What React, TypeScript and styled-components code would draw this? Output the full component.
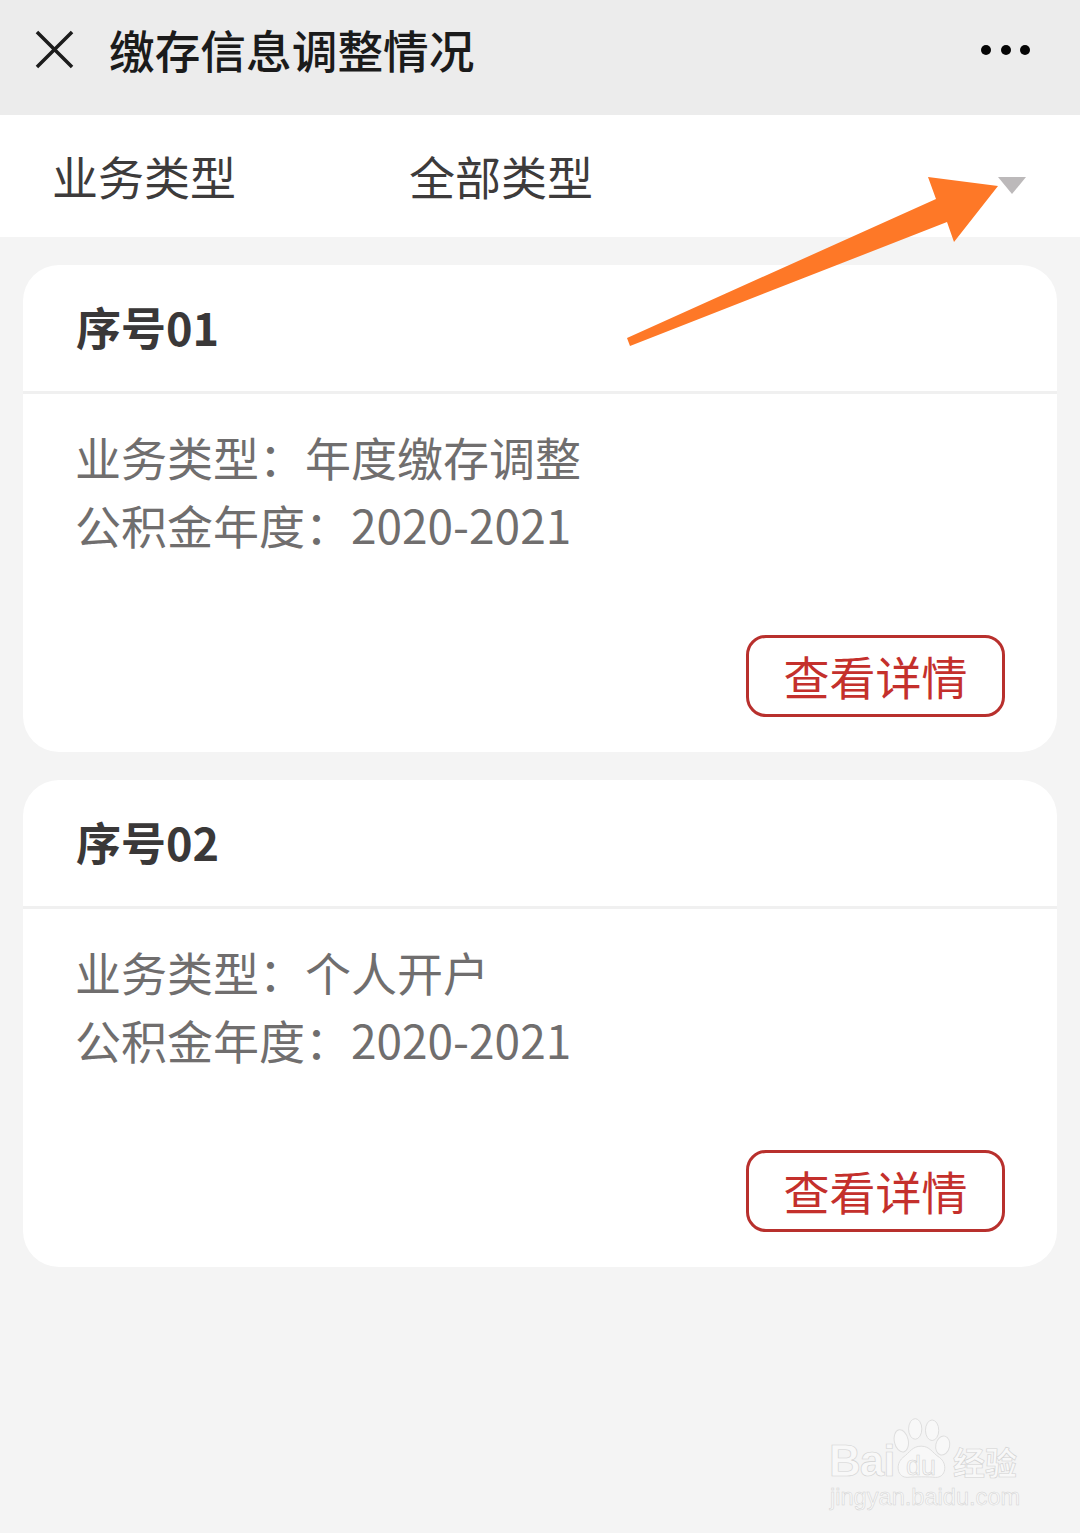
import * as React from 'react';
import styled, { createGlobalStyle } from 'styled-components';

const records = [
  { id: '01', type: '年度缴存调整', year: '2020-2021' },
  { id: '02', type: '个人开户', year: '2020-2021' },
];

const App: React.FC = () => {
  return (
    <Page>
      <GlobalStyle />
      <NavBar>
        <CloseIcon viewBox="0 0 40 40">
          <path d="M2 2 L38 38 M38 2 L2 38" />
        </CloseIcon>
        <NavTitle>缴存信息调整情况</NavTitle>
        <MoreDots>
          <Dot />
          <Dot />
          <Dot />
        </MoreDots>
      </NavBar>
      <FilterBar>
        <FilterLabel>业务类型</FilterLabel>
        <FilterValue>全部类型</FilterValue>
        <Caret />
      </FilterBar>
      <CardList>
        {records.map((r) => (
          <Card key={r.id}>
            <CardHead>序号{r.id}</CardHead>
            <CardBody>
              <InfoLine>业务类型：{r.type}</InfoLine>
              <InfoLine>公积金年度：{r.year}</InfoLine>
              <DetailRow>
                <DetailButton>查看详情</DetailButton>
              </DetailRow>
            </CardBody>
          </Card>
        ))}
      </CardList>
      <Arrow viewBox="0 0 1080 400">
        <polygon points="627,338 936,199 928,177 998,186 954,242 947,222 630,346" fill="#fe7827" />
      </Arrow>
      <Watermark>
        <PawLogo viewBox="280 50 175 190">
          <g fill="#f8f8f8" stroke="#dedede" strokeWidth="3">
            <ellipse cx="305" cy="122" rx="21" ry="34" transform="rotate(-12 305 122)" />
            <ellipse cx="347" cy="86" rx="20" ry="31" />
            <ellipse cx="398" cy="90" rx="20" ry="31" />
            <ellipse cx="430" cy="136" rx="21" ry="29" transform="rotate(12 430 136)" />
            <path d="M365 138 C392 138 398 158 420 172 C446 190 440 234 408 232 C388 230 345 230 325 232 C292 234 286 192 310 172 C332 156 338 138 365 138 Z" />
          </g>
        </PawLogo>
        <MarkRow>
          <MarkBrand>Bai</MarkBrand>
          <MarkDu>du</MarkDu>
          <MarkCn>经验</MarkCn>
        </MarkRow>
        <MarkUrl>jingyan.baidu.com</MarkUrl>
      </Watermark>
    </Page>
  );
};
export default App;

const GlobalStyle = createGlobalStyle`
  html, body {
    margin: 0;
    padding: 0;
    background: #f4f4f4;
  }
  * {
    box-sizing: border-box;
  }
`;
const Page = styled.div`
  position: relative;
  width: 1080px;
  height: 1533px;
  overflow: hidden;
  background: #f4f4f4;
  font-family: 'Noto Sans CJK SC', 'Noto Sans', sans-serif;
`;
const NavBar = styled.div`
  display: flex;
  align-items: center;
  height: 115px;
  padding: 0 50px 16px 35px;
  background: #ececec;
`;
const CloseIcon = styled.svg`
  width: 39px;
  height: 39px;
  stroke: #1c1c1c;
  stroke-width: 3.6;
  fill: none;
`;
const NavTitle = styled.div`
  flex: 1;
  margin-left: 35px;
  margin-bottom: 2px;
  font-size: 45.7px;
  font-weight: 500;
  line-height: 60px;
  color: #1b1b1b;
`;
const MoreDots = styled.div`
  display: flex;
  gap: 9.5px;
`;
const Dot = styled.span`
  width: 10px;
  height: 10px;
  border-radius: 50%;
  background: #050505;
`;
const FilterBar = styled.div`
  display: flex;
  align-items: center;
  height: 122px;
  padding: 0 54px 2px 52px;
  background: #fff;
  font-size: 46px;
  color: #3d3b3b;
`;
const FilterLabel = styled.div`
  width: 357px;
`;
const FilterValue = styled.div`
  flex: 1;
`;
const Caret = styled.div`
  width: 0;
  height: 0;
  margin-top: 20px;
  border-left: 14px solid transparent;
  border-right: 14px solid transparent;
  border-top: 17px solid #bcb9ba;
`;
const CardList = styled.div`
  display: flex;
  flex-direction: column;
  gap: 28px;
  padding: 28px 23px 0;
`;
const Card = styled.div`
  height: 487px;
  border-radius: 36px;
  background: #fff;
`;
const CardHead = styled.div`
  display: flex;
  align-items: center;
  height: 129px;
  padding: 0 54px 4px 53px;
  border-bottom: 3px solid #f0f0f0;
  font-size: 45px;
  font-weight: 700;
  color: #3a3838;
`;
const CardBody = styled.div`
  padding: 28px 54px 0 52px;
`;
const InfoLine = styled.div`
  font-size: 46px;
  line-height: 68px;
  color: #706e6e;
`;
const DetailRow = styled.div`
  display: flex;
  justify-content: flex-end;
  margin-top: 77px;
`;
const DetailButton = styled.div`
  display: flex;
  align-items: center;
  justify-content: center;
  width: 259px;
  height: 82px;
  margin-right: -2px;
  padding-bottom: 3px;
  border: 3px solid #b8302d;
  border-radius: 20px;
  font-size: 46px;
  color: #c4302c;
`;
const Arrow = styled.svg`
  position: absolute;
  left: 0;
  top: 0;
  width: 1080px;
  height: 400px;
`;
const Watermark = styled.div`
  position: absolute;
  left: 828px;
  top: 1417px;
  width: 200px;
  height: 100px;
`;
const PawLogo = styled.svg`
  position: absolute;
  left: 65px;
  top: 0;
  width: 58px;
  height: 63px;
`;
const MarkRow = styled.div`
  position: absolute;
  left: 0;
  top: 20px;
  width: 200px;
  height: 48px;
  color: #f8f8f8;
  -webkit-text-stroke: 0.6px #d2d2d2;
`;
const MarkBrand = styled.span`
  position: absolute;
  left: 1px;
  top: 0;
  font-family: 'Liberation Sans', sans-serif;
  font-size: 44px;
  font-weight: 700;
  line-height: 48px;
  letter-spacing: -1px;
`;
const MarkDu = styled.span`
  position: absolute;
  left: 78px;
  top: 13px;
  font-family: 'Liberation Sans', sans-serif;
  font-size: 27px;
  line-height: 32px;
`;
const MarkCn = styled.span`
  position: absolute;
  left: 125px;
  top: 0;
  font-size: 32px;
  font-weight: 700;
  line-height: 48px;
`;
const MarkUrl = styled.div`
  position: absolute;
  left: 2px;
  top: 67px;
  font-family: 'Liberation Sans', sans-serif;
  font-size: 23.6px;
  line-height: 26px;
  color: #f8f8f8;
  -webkit-text-stroke: 0.5px #d2d2d2;
`;
